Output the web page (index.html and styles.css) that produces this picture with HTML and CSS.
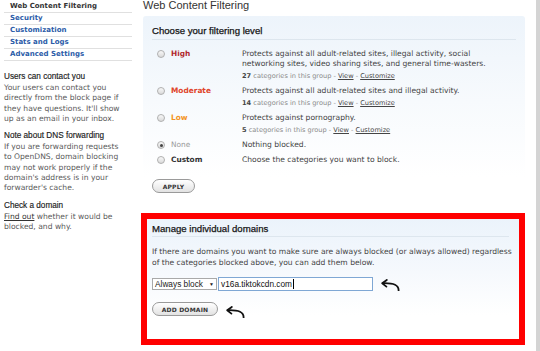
FILE: index.html
```html
<!DOCTYPE html>
<html lang="en">
<head>
<meta charset="utf-8">
<title>Web Content Filtering</title>
<link rel="stylesheet" href="styles.css">
</head>
<body>
<div class="page">
  <div class="content">
    <aside class="side">
      <ul class="nav">
        <li class="current">Web Content Filtering</li>
        <li>Security</li>
        <li>Customization</li>
        <li>Stats and Logs</li>
        <li>Advanced Settings</li>
      </ul>
      <h3 class="side-title first">Users can contact you</h3>
      <p class="side-text">Your users can contact you directly from the block page if they have questions. It'll show up as an email in your inbox.</p>
      <h3 class="side-title">Note about DNS forwarding</h3>
      <p class="side-text">If you are forwarding requests to OpenDNS, domain blocking may not work properly if the domain's address is in your forwarder's cache.</p>
      <h3 class="side-title">Check a domain</h3>
      <p class="side-text"><a class="dark-link" href="#">Find out</a> whether it would be blocked, and why.</p>
    </aside>

    <main class="main">
      <h1 class="page-title">Web Content Filtering</h1>

      <section class="panel levels">
        <h2 class="panel-title">Choose your filtering level</h2>
        <div class="options">
          <div class="opt">
            <div class="opt-label"><span class="radio"></span><span class="lvl high">High</span></div>
            <div class="opt-desc">
              <div>Protects against all adult-related sites, illegal activity, social networking sites, video sharing sites, and general time-wasters.</div>
              <div class="meta"><b>27</b> categories in this group - <a href="#">View</a> - <a href="#">Customize</a></div>
            </div>
          </div>
          <div class="opt">
            <div class="opt-label"><span class="radio"></span><span class="lvl moderate">Moderate</span></div>
            <div class="opt-desc">
              <div>Protects against all adult-related sites and illegal activity.</div>
              <div class="meta"><b>14</b> categories in this group - <a href="#">View</a> - <a href="#">Customize</a></div>
            </div>
          </div>
          <div class="opt">
            <div class="opt-label"><span class="radio"></span><span class="lvl low">Low</span></div>
            <div class="opt-desc">
              <div>Protects against pornography.</div>
              <div class="meta"><b>5</b> categories in this group - <a href="#">View</a> - <a href="#">Customize</a></div>
            </div>
          </div>
          <div class="opt">
            <div class="opt-label"><span class="radio checked"></span><span class="lvl none">None</span></div>
            <div class="opt-desc"><div>Nothing blocked.</div></div>
          </div>
          <div class="opt">
            <div class="opt-label"><span class="radio"></span><span class="lvl custom">Custom</span></div>
            <div class="opt-desc"><div>Choose the categories you want to block.</div></div>
          </div>
        </div>
        <button class="btn btn-apply">APPLY</button>
      </section>

      <section class="domains">
        <h2 class="panel-title">Manage individual domains</h2>
        <p class="domains-text">If there are domains you want to make sure are always blocked (or always allowed) regardless of the categories blocked above, you can add them below.</p>
        <div class="add-row">
          <div class="select"><span>Always block</span><span class="caret-down">&#9660;</span></div>
          <div class="field">v16a.tiktokcdn.com<span class="cursor"></span></div>
          <svg class="arrow arrow-1" viewBox="0 0 20 12" width="20" height="12" aria-hidden="true">
            <path d="M18.6 11.6 C18.8 6.2 14 3.9 3 4.2" fill="none" stroke="#111" stroke-width="1.8" stroke-linecap="round"/>
            <path d="M6.8 0.9 L2.2 4.2 L6.4 7.6" fill="none" stroke="#111" stroke-width="1.8" stroke-linecap="round" stroke-linejoin="round"/>
          </svg>
        </div>
        <div class="btn-row">
          <button class="btn btn-add">ADD DOMAIN</button>
          <svg class="arrow arrow-2" viewBox="0 0 20 12" width="20" height="12" aria-hidden="true">
            <path d="M18.6 11.6 C18.8 6.2 14 3.9 3 4.2" fill="none" stroke="#111" stroke-width="1.8" stroke-linecap="round"/>
            <path d="M6.8 0.9 L2.2 4.2 L6.4 7.6" fill="none" stroke="#111" stroke-width="1.8" stroke-linecap="round" stroke-linejoin="round"/>
          </svg>
        </div>
      </section>
    </main>
  </div>
  <div class="edge"></div>
</div>
</body>
</html>
```

FILE: styles.css
```css
html, body {
  margin: 0;
  padding: 0;
}
body {
  width: 540px;
  height: 351px;
  overflow: hidden;
  background: #fff;
  font-family: "DejaVu Sans", Verdana, sans-serif;
  color: #444;
}
.page {
  display: flex;
  height: 351px;
}
.content {
  flex: 1;
  display: flex;
  align-items: flex-start;
}
.edge {
  width: 4px;
  background: #d4d4d4;
}

/* ---------- sidebar ---------- */
.side {
  width: 128px;
  padding-left: 4px;
  margin-right: 11px;
  flex-shrink: 0;
}
.nav {
  list-style: none;
  margin: 1px 0 0;
  padding: 0;
}
.nav li {
  height: 11px;
  line-height: 11px;
  border-bottom: 1px solid #e0e0e0;
  padding-left: 6px;
  font-size: 7px;
  font-weight: bold;
  color: #2b5ba8;
  white-space: nowrap;
}
.nav li.current {
  color: #333;
}
.side-title {
  font-family: "Liberation Sans", Arial, sans-serif;
  font-weight: normal;
  font-size: 8.2px;
  line-height: 10px;
  color: #1a1a1a;
  margin: 7px 0 0;
  -webkit-text-stroke: 0.15px #1a1a1a;
}
.side-title.first {
  margin-top: 11px;
}
.side-text {
  width: 121px;
  margin: 1px 0 0;
  font-size: 7.6px;
  line-height: 10.3px;
  color: #5a5a5a;
}
.dark-link {
  color: #333;
  text-decoration: underline;
}

/* ---------- main ---------- */
.main {
  width: 382px;
  flex-shrink: 0;
}
.page-title {
  font-family: "Liberation Sans", Arial, sans-serif;
  font-weight: normal;
  font-size: 11px;
  line-height: 13px;
  color: #333;
  margin: -1px 0 4px;
}
.panel {
  background: linear-gradient(#edf4fb, #f7fafd 45%, #fff 85%);
  border-radius: 3px;
}
.levels {
  padding: 9px 9px 12px;
}
.panel-title {
  font-family: "Liberation Sans", Arial, sans-serif;
  font-weight: normal;
  font-size: 9.6px;
  line-height: 12px;
  color: #141414;
  -webkit-text-stroke: 0.25px #141414;
  margin: 0;
  padding-bottom: 2px;
  border-bottom: 1px solid #dde6ee;
}
.options {
  margin-top: 9px;
}
.opt {
  display: grid;
  grid-template-columns: 90px 264px;
}
.opt + .opt {
  margin-top: 5px;
}
.opt-label {
  display: flex;
  align-items: center;
  gap: 6px;
  height: 10px;
  padding-left: 5px;
}
.radio {
  width: 8px;
  height: 8px;
  box-sizing: border-box;
  border-radius: 50%;
  border: 1px solid #b0b0b0;
  background: linear-gradient(#f8f8f8, #dadada);
  display: flex;
  align-items: center;
  justify-content: center;
}
.radio.checked::after {
  content: "";
  width: 3px;
  height: 3px;
  border-radius: 50%;
  background: #444;
}
.lvl {
  font-size: 7.4px;
  font-weight: bold;
  line-height: 10px;
}
.lvl.high { color: #b0262c; }
.lvl.moderate { color: #e0442a; }
.lvl.low { color: #f39323; }
.lvl.none { color: #999; font-weight: normal; }
.lvl.custom { color: #333; }
.opt-desc {
  font-size: 7.6px;
  line-height: 10px;
  color: #444;
}
.meta {
  margin-top: 2px;
  font-size: 6.6px;
  line-height: 10px;
  color: #8a8a8a;
}
.meta b {
  color: #444;
}
.meta a {
  color: #444;
  text-decoration: underline;
}
.btn {
  display: flex;
  align-items: center;
  justify-content: center;
  height: 14px;
  padding: 0;
  border: 1px solid #9a9a9a;
  border-radius: 7px;
  background: linear-gradient(#ffffff, #e2e2e2);
  font-family: "DejaVu Sans", Verdana, sans-serif;
  font-weight: bold;
  font-size: 6px;
  letter-spacing: 0.2px;
  color: #333;
  box-sizing: border-box;
}
.btn-apply {
  width: 43px;
  margin-top: 14px;
}

/* ---------- domains (highlighted) ---------- */
.domains {
  box-sizing: border-box;
  width: 384px;
  height: 132px;
  margin: 8px 0 0 -2px;
  border: 6px solid #ff0000;
  padding: 4px 5px 0;
  background: linear-gradient(#ebf3fb, #f6f9fd 45%, #fff 80%);
}
.domains .panel-title {
  padding-bottom: 1px;
  margin-right: 5px;
}
.domains-text {
  margin: 9px 0 0;
  font-size: 7.6px;
  line-height: 11px;
  color: #444;
}
.add-row {
  display: flex;
  align-items: center;
  margin-top: 8px;
}
.select {
  box-sizing: border-box;
  width: 65px;
  height: 12px;
  margin-right: 1px;
  display: flex;
  align-items: center;
  justify-content: space-between;
  padding: 0 2px 0 2px;
  border: 1px solid #a9a9a9;
  background: #fff;
  font-family: "Liberation Sans", Arial, sans-serif;
  font-size: 8.3px;
  color: #222;
}
.caret-down {
  font-size: 5px;
  color: #222;
}
.field {
  box-sizing: border-box;
  width: 155px;
  height: 14px;
  display: flex;
  align-items: center;
  padding-left: 2px;
  border: 1px solid #7fa7d4;
  background: #fff;
  font-family: "Liberation Sans", Arial, sans-serif;
  font-size: 8.3px;
  color: #111;
}
.cursor {
  display: inline-block;
  width: 1px;
  height: 10px;
  margin-left: 1px;
  background: #000;
}
.arrow-1 {
  margin-left: 7px;
  margin-top: 3px;
}
.btn-row {
  display: flex;
  align-items: flex-start;
  margin-top: 11px;
}
.btn-add {
  width: 66px;
}
.arrow-2 {
  margin-left: 7px;
  margin-top: 4px;
}
```
